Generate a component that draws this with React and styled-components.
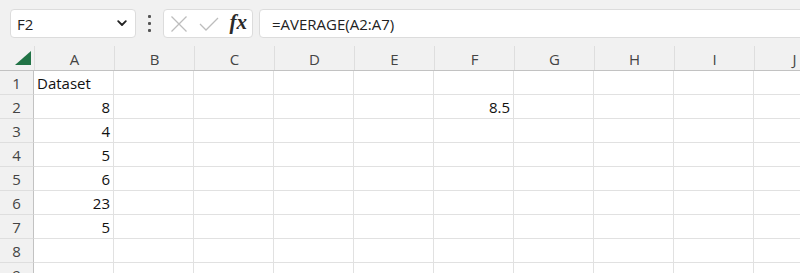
import React from "react";
import styled, { createGlobalStyle } from "styled-components";

const Global = createGlobalStyle`
  html, body { margin: 0; padding: 0; background: #ffffff; overflow: hidden; }
  body { font-family: "Open Sans", "Noto Sans", sans-serif; }
`;

const Page = styled.div`
  width: 800px;
  height: 273px;
  overflow: hidden;
  background: #ffffff;
`;

const Toolbar = styled.div`
  height: 46px;
  box-sizing: border-box;
  padding: 9px 0 0 10px;
  background: #f1f1f1;
  display: flex;
  align-items: flex-start;
`;

const Box = styled.div`
  height: 29px;
  box-sizing: border-box;
  background: #ffffff;
  border: 1px solid #dcdcdc;
  border-radius: 4px;
  display: flex;
  align-items: center;
`;

const NameBox = styled(Box)`
  width: 126px;
  padding: 0 8px 0 6px;
  justify-content: space-between;
  font-size: 15px;
  color: #222;
`;

const Dots = styled.div`
  width: 27px;
  height: 29px;
  display: flex;
  flex-direction: column;
  align-items: center;
  justify-content: center;
  gap: 4px;
  span {
    width: 3px;
    height: 3px;
    border-radius: 1px;
    background: #555;
  }
`;

const FxBox = styled(Box)`
  width: 90px;
  padding: 0 5px 0 6px;
  justify-content: space-between;
`;

const Fx = styled.span`
  font-family: "Liberation Serif", "DejaVu Serif", serif;
  font-style: italic;
  font-weight: bold;
  font-size: 21px;
  color: #2a2a2a;
  line-height: 1;
  margin-top: -2px;
`;

const FormulaBox = styled(Box)`
  margin-left: 6px;
  flex: 1;
  margin-right: -20px;
  padding-left: 12px;
  font-size: 15px;
  color: #222;
`;

const HeaderRow = styled.div`
  display: flex;
  height: 25px;
  box-sizing: border-box;
  background: #f1f1f1;
  border-bottom: 1px solid #c2c2c2;
`;

const Corner = styled.div`
  width: 34px;
  flex: none;
  box-sizing: border-box;
  position: relative;
`;

const Triangle = styled.div`
  position: absolute;
  left: 15px;
  top: 5px;
  width: 0;
  height: 0;
  border-left: 16px solid transparent;
  border-bottom: 14px solid #217346;
`;

const ColHead = styled.div`
  width: 80px;
  flex: none;
  box-sizing: border-box;
  border-left: 1px solid #dedede;
  display: flex;
  align-items: center;
  justify-content: center;
  font-size: 15px;
  color: #444;
  padding-top: 1px;
`;

const Row = styled.div`
  display: flex;
  height: 24px;
  box-sizing: border-box;
`;

const RowHead = styled.div`
  width: 34px;
  flex: none;
  box-sizing: border-box;
  background: #f1f1f1;
  border-right: 1px solid #c2c2c2;
  border-bottom: 1px solid #dedede;
  display: flex;
  align-items: center;
  justify-content: center;
  font-size: 15px;
  color: #444;
`;

const Cell = styled.div`
  width: 80px;
  flex: none;
  box-sizing: border-box;
  border-right: 1px solid #e1e1e1;
  border-bottom: 1px solid #e1e1e1;
  display: flex;
  align-items: center;
  justify-content: ${(p) => (p.$num ? "flex-end" : "flex-start")};
  padding: 0 3px 0 3px;
  font-size: 15px;
  color: #111;
  white-space: nowrap;
`;

const cols = ["A", "B", "C", "D", "E", "F", "G", "H", "I", "J"];

const data = {
  1: { A: "Dataset" },
  2: { A: "8", F: "8.5" },
  3: { A: "4" },
  4: { A: "5" },
  5: { A: "6" },
  6: { A: "23" },
  7: { A: "5" },
};

export default function App() {
  return (
    <Page>
      <Global />
      <Toolbar>
        <NameBox>
          <span>F2</span>
          <svg width="10" height="7" viewBox="0 0 10 7">
            <path d="M1.2 1.2 L5 5 L8.8 1.2" fill="none" stroke="#222" strokeWidth="1.8" strokeLinecap="round" strokeLinejoin="round" />
          </svg>
        </NameBox>
        <Dots>
          <span />
          <span />
          <span />
        </Dots>
        <FxBox>
          <svg width="18" height="18" viewBox="0 0 18 18">
            <path d="M1.5 1.5 L16.5 16.5 M16.5 1.5 L1.5 16.5" stroke="#bdbdbd" strokeWidth="1.3" fill="none" />
          </svg>
          <svg width="20" height="14" viewBox="0 0 20 14">
            <path d="M1 7 L7 13 L19 1" stroke="#bdbdbd" strokeWidth="1.3" fill="none" />
          </svg>
          <Fx>fx</Fx>
        </FxBox>
        <FormulaBox>=AVERAGE(A2:A7)</FormulaBox>
      </Toolbar>
      <HeaderRow>
        <Corner>
          <Triangle />
        </Corner>
        {cols.map((c) => (
          <ColHead key={c}>{c}</ColHead>
        ))}
      </HeaderRow>
      {[1, 2, 3, 4, 5, 6, 7, 8, 9].map((r) => (
        <Row key={r}>
          <RowHead>{r}</RowHead>
          {cols.map((c) => {
            const v = data[r] && data[r][c];
            const isNum = v !== undefined && !isNaN(Number(v));
            return (
              <Cell key={c} $num={isNum}>
                {v}
              </Cell>
            );
          })}
        </Row>
      ))}
    </Page>
  );
}
